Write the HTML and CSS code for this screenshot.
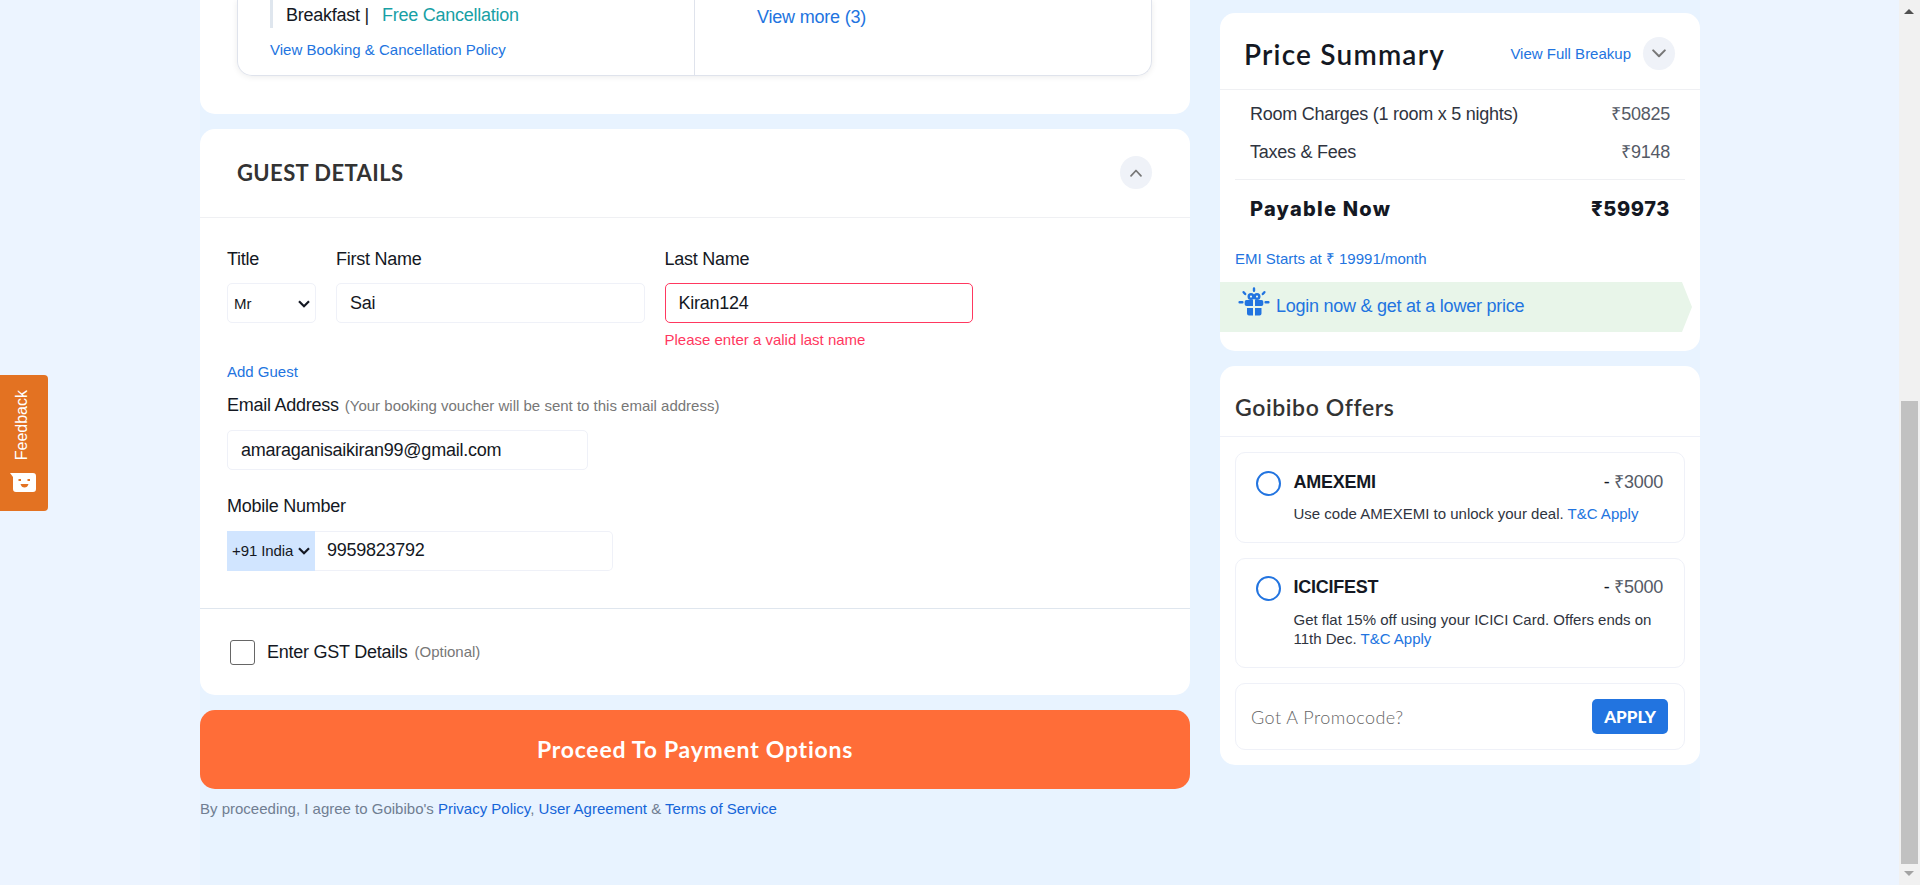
FILE: index.html
```html
<!DOCTYPE html>
<html lang="en">
<head>
<meta charset="utf-8">
<title>Goibibo - Review Booking</title>
<link rel="stylesheet" href="styles.css">
</head>
<body>
<div class="viewport">
  <main class="page">
    <div class="left">
      <section class="card room-card">
        <div class="room-box">
          <div class="room-plan">
            <div class="meal"><span class="meal-name">Breakfast |</span><span class="free">Free Cancellation</span></div>
            <a class="link policy">View Booking &amp; Cancellation Policy</a>
          </div>
          <div class="room-more"><a class="link more">View more (3)</a></div>
        </div>
      </section>

      <section class="card guest-card">
        <header class="guest-head">
          <h2 class="guest-title">GUEST DETAILS</h2>
          <button class="round" aria-label="Collapse"><svg width="12" height="8" viewBox="0 0 14 9"><path d="M1.2 7.8 7 1.6l5.8 6.2"/></svg></button>
        </header>
        <div class="guest-form">
          <div class="names">
            <div class="field title-field">
              <label class="label">Title</label>
              <div class="input select"><span>Mr</span><svg class="caret" width="12" height="8" viewBox="0 0 12 8"><path d="M1 1.2 6 6.2l5-5"/></svg></div>
            </div>
            <div class="field name-field">
              <label class="label">First Name</label>
              <div class="input">Sai</div>
            </div>
            <div class="field name-field">
              <label class="label">Last Name</label>
              <div class="input invalid">Kiran124</div>
              <p class="error">Please enter a valid last name</p>
            </div>
          </div>
          <div class="add"><a class="link">Add Guest</a></div>
          <div class="email-label"><span>Email Address</span><span class="hint">(Your booking voucher will be sent to this email address)</span></div>
          <div class="input email">amaraganisaikiran99@gmail.com</div>
          <div class="mobile-label">Mobile Number</div>
          <div class="phone">
            <div class="code"><span>+91 India</span><svg class="caret" width="12" height="8" viewBox="0 0 12 8"><path d="M1 1.2 6 6.2l5-5"/></svg></div>
            <div class="input number">9959823792</div>
          </div>
        </div>
        <div class="gst"><span class="check"></span><span>Enter GST Details</span><span class="hint opt">(Optional)</span></div>
      </section>

      <button class="proceed">Proceed To Payment Options</button>
      <p class="terms">By proceeding, I agree to Goibibo's <a>Privacy Policy</a>, <a>User Agreement</a> &amp; <a>Terms of Service</a></p>
    </div>

    <aside class="right">
      <section class="card price-card">
        <header class="price-head">
          <h2 class="price-title">Price Summary</h2>
          <a class="link breakup">View Full Breakup</a>
          <button class="round" aria-label="Expand"><svg width="14" height="9" viewBox="0 0 14 9"><path d="M1.200 1.400 7 7.200l5.800-5.800"/></svg></button>
        </header>
        <div class="row charges"><span>Room Charges (1 room x 5 nights)</span><span class="amount">₹50825</span></div>
        <div class="row taxes"><span>Taxes &amp; Fees</span><span class="amount">₹9148</span></div>
        <div class="row payable"><span class="pay-name">Payable Now</span><span class="pay-amt">₹59973</span></div>
        <div class="emi"><a class="link">EMI Starts at ₹ 19991/month</a></div>
        <div class="login">
          <svg class="gift" width="32" height="30" viewBox="0 0 32 30">
            <g stroke="#2274e0" stroke-width="2.4" stroke-linecap="round" fill="none">
              <path d="M16 1.4v2.4M5.6 5.2 7.2 7M26.4 5.2 24.8 7M1.6 15.3h2.8M27.6 15.3h2.8"/>
              <circle cx="13" cy="9.6" r="2.3"/><circle cx="19" cy="9.6" r="2.3"/>
            </g>
            <path fill="#2274e0" d="M8.5 13H15v6H8.5a1.8 1.8 0 0 1-1.8-1.8v-2.4A1.8 1.8 0 0 1 8.5 13zM17 13h6.5a1.8 1.8 0 0 1 1.8 1.8v2.4a1.8 1.8 0 0 1-1.8 1.8H17zM9 21h6v7.5h-4a2 2 0 0 1-2-2zM17 21h6.5v5.500a2 2 0 0 1-2 2H17z"/>
          </svg>
          <span class="login-text">Login now &amp; get at a lower price</span>
        </div>
      </section>

      <section class="card offers-card">
        <header class="offers-head"><h2 class="offers-title">Goibibo Offers</h2></header>
        <div class="offer offer-one">
          <span class="radio"></span>
          <div class="offer-body">
            <div class="offer-top"><b>AMEXEMI</b><span class="amount off"><i>-</i> ₹3000</span></div>
            <p class="desc">Use code AMEXEMI to unlock your deal. <a class="link">T&amp;C Apply</a></p>
          </div>
        </div>
        <div class="offer offer-two">
          <span class="radio"></span>
          <div class="offer-body">
            <div class="offer-top"><b>ICICIFEST</b><span class="amount off"><i>-</i> ₹5000</span></div>
            <p class="desc">Get flat 15% off using your ICICI Card. Offers ends on<br>11th Dec. <a class="link">T&amp;C Apply</a></p>
          </div>
        </div>
        <div class="promo"><span class="promo-hint">Got A Promocode?</span><button class="apply">APPLY</button></div>
      </section>
    </aside>
  </main>

  <div class="scrollbar">
    <svg width="10" height="5" viewBox="0 0 10 5"><path d="M5 0l5 5H0z" fill="#505050"/></svg>
    <div class="thumb"></div>
    <svg width="10" height="5" viewBox="0 0 10 5"><path d="M5 5l5-5H0z" fill="#a3a3a3"/></svg>
  </div>
</div>
<div class="feedback">
  <span class="fb-text">Feedback</span>
  <svg width="26" height="19" viewBox="0 0 26 19"><path fill="#fff" d="M0 0h23a3 3 0 0 1 3 3v13a3 3 0 0 1-3 3H6a3 3 0 0 1-3-3V4z"/><path fill="#e37222" d="M8.500 6H11v2H8.500zM17.500 6H20v2h-2.500zM10.500 11h8q-1 3.500-4 3.500t-4-3.500z"/></svg>
</div>
</body>
</html>
```
FILE: styles.css
```css
* { box-sizing: border-box; }
body { margin: 0; font: 18px/20px "Liberation Sans", Arial, sans-serif; letter-spacing: -.25px; color: #141823; background: #ecf4ff; overflow: hidden; }
h2, p { margin: 0; }
button { border: 0; padding: 0; font: inherit; }
svg { display: block; flex: none; }
span, a, b { white-space: nowrap; }
.link { color: #2274e0; font-size: 15px; letter-spacing: 0; }
.hint { color: #777; font-size: 15px; letter-spacing: 0; }

.viewport { display: flex; height: 885px; }
.page { display: grid; grid-template-columns: 990px 480px; gap: 30px; width: 1500px; margin-left: 200px; background: #e8f3ff; align-items: start; }
.left, .right { display: flex; flex-direction: column; gap: 15px; }
.card { background: #fff; border-radius: 15px; }

.room-card { height: 114px; padding: 0 38px 38px 37px; border-radius: 0 0 15px 15px; }
.room-box { display: flex; height: 76px; border: 1px solid #dfe3ec; border-top: 0; border-radius: 0 0 15px 15px; box-shadow: 0 1px 6px rgba(0, 0, 0, .08); }
.room-plan { width: 456px; padding-left: 32px; }
.meal { height: 28px; padding: 1px 0 0 13px; border-left: 3px solid #dfe6ee; line-height: 28px; display: flex; gap: 13px; }
.free { color: #18a0a5; }
.policy { display: block; padding-top: 12px; }
.room-more { flex: 1; border-left: 1px solid #dfe3ec; padding: 7px 0 0 62px; }
.more { font-size: 18px; letter-spacing: -.2px; }

.guest-card { height: 566px; }
.guest-head { display: flex; justify-content: space-between; align-items: center; height: 89px; padding: 0 38px 1px 37px; border-bottom: 1px solid #eff0f3; }
.guest-title { font: 700 22px/28px Lato, sans-serif; letter-spacing: .4px; color: #333; }
.round { display: flex; align-items: center; justify-content: center; width: 32px; height: 33px; border-radius: 50%; background: #eff2f8; }
.round path { fill: none; stroke: #777; stroke-width: 2; stroke-linecap: round; stroke-linejoin: round; }
.guest-form { height: 391px; padding: 31px 27px 0; border-bottom: 1px solid #dfe6ee; }
.names { display: flex; gap: 20px; height: 112px; }
.title-field { width: 89px; }
.name-field { width: 308.5px; }
.label { display: block; margin-bottom: 14px; }
.input { display: flex; align-items: center; height: 40px; padding: 0 13px; border: 1px solid #eff1f8; border-radius: 5px; }
.select { justify-content: space-between; padding: 1px 5px 0 6px; font-size: 15px; letter-spacing: 0; }
.caret path { fill: none; stroke: #141823; stroke-width: 2.2; }
.invalid { border-color: #ff3860; }
.error { padding-top: 7px; font-size: 15px; letter-spacing: 0; color: #ff3860; }
.add { height: 34px; }
.email-label { display: flex; gap: 6px; height: 35px; }
.email-label .hint { padding-top: 1px; }
.email { width: 361px; }
.mobile-label { height: 61px; padding-top: 26px; }
.phone { display: flex; }
.code { display: flex; align-items: center; justify-content: space-between; width: 88px; padding: 0 5px; background: #d1e5ff; font-size: 15px; letter-spacing: -.1px; }
.number { width: 298px; padding: 0 12px 2px; border-left: 0; border-radius: 0 5px 5px 0; }
.gst { display: flex; align-items: center; height: 86px; padding: 0 0 0 30px; }
.check { width: 25px; height: 25px; border: 1px solid #666; border-radius: 3px; margin-right: 12px; }
.opt { margin-left: 7px; }
.proceed { height: 79px; padding-bottom: 1px; border-radius: 15px; background: #ff6d38; color: #fff; font: 700 23px/28px Lato, sans-serif; letter-spacing: .75px; }
.terms { margin-top: -5px; font-size: 15px; letter-spacing: 0; color: #707e92; }
.terms a { color: #1565d8; }

.right { padding-top: 13px; }
.price-card { height: 338px; }
.price-head { display: flex; align-items: center; height: 77px; padding: 5px 25px 0 24px; border-bottom: 1px solid #eff0f3; }
.price-title { flex: 1; font: 600 28px/32px Lato, sans-serif; letter-spacing: 1.2px; }
.breakup { margin-right: 12px; }
.row { display: flex; justify-content: space-between; padding: 0 30px; color: #2f3440; }
.charges { padding-top: 14px; height: 38px; }
.taxes { padding-top: 14px; }
.amount { color: #555a66; }
.payable { margin: 17px 15px 0; padding: 17px 15px 0; border-top: 1px solid #eff0f3; height: 67px; font: 800 20px/24px Inter, sans-serif; color: #141823; }
.pay-name { letter-spacing: 1.25px; }
.pay-amt { letter-spacing: .6px; }
.emi { padding: 2px 15px 0; height: 36px; }
.login { display: flex; width: 472px; height: 50px; padding: 5px 0 0 18px; gap: 6px; background: #e8f5e9; clip-path: polygon(0 0, 462px 0, 100% 50%, 462px 100%, 0 100%); color: #2274e0; }
.login-text { padding-top: 9px; }

.offers-card { height: 399px; display: flex; flex-direction: column; }
.offers-head { height: 71px; padding: 26px 15px 0; border-bottom: 1px solid #eff1f8; }
.offers-title { font: 600 23px/30px Lato, sans-serif; letter-spacing: .6px; color: #333; }
.offer { display: flex; gap: 12.5px; margin: 15px 15px 0; padding: 18px 21px 0 20px; border: 1px solid #eff1f8; border-radius: 10px; }
.offer-one { height: 91px; }
.offer-two { height: 110px; padding-top: 17px; }
.radio { flex: none; width: 25px; height: 25px; border: 2px solid #2274e0; border-radius: 50%; }
.offer-body { flex: 1; padding-top: 1px; }
.offer-top { display: flex; justify-content: space-between; }
.off i { font-style: normal; color: #141823; }
.desc { padding-top: 12px; font-size: 15px; letter-spacing: 0; line-height: 19px; color: #2f3440; }
.offer-two .desc { padding-top: 13px; }
.promo { display: flex; align-items: center; justify-content: space-between; margin: 15px 15px 0; height: 67px; padding: 0 16px 0 15px; border: 1px solid #eff1f8; border-radius: 10px; }
.promo-hint { font: 300 18px/24px Lato, sans-serif; letter-spacing: .45px; color: #666; }
.apply { width: 76px; height: 35px; border-radius: 5px; background: #2274e0; color: #fff; font: 900 17px/20px Lato, sans-serif; letter-spacing: 0; }

.scrollbar { display: flex; flex-direction: column; align-items: center; width: 21px; margin-left: auto; padding: 9px 1px 9px 0; background: #f1f1f1; }
.thumb { width: 17px; height: 463px; margin: auto 0 7px; background: #c1c1c1; }
.feedback { position: fixed; left: 0; top: 375px; width: 48px; height: 136px; border-radius: 0 4px 4px 0; background: #e37222; display: flex; flex-direction: column; align-items: center; justify-content: space-between; padding: 15px 8px 19px 4px; color: #fff; }
.fb-text { writing-mode: vertical-rl; transform: rotate(180deg); font-size: 16px; letter-spacing: 0; }
.feedback svg { margin-left: 2px; }
```
